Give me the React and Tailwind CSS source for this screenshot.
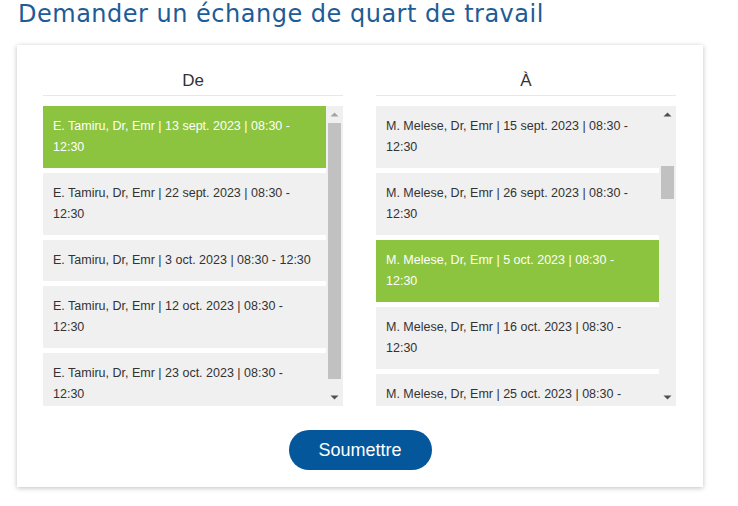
import React from "react";

const left = [
  { t: "E. Tamiru, Dr, Emr | 13 sept. 2023 | 08:30 - 12:30", sel: true },
  { t: "E. Tamiru, Dr, Emr | 22 sept. 2023 | 08:30 - 12:30" },
  { t: "E. Tamiru, Dr, Emr | 3 oct. 2023 | 08:30 - 12:30" },
  { t: "E. Tamiru, Dr, Emr | 12 oct. 2023 | 08:30 - 12:30" },
  { t: "E. Tamiru, Dr, Emr | 23 oct. 2023 | 08:30 - 12:30" },
];
const right = [
  { t: "M. Melese, Dr, Emr | 15 sept. 2023 | 08:30 - 12:30" },
  { t: "M. Melese, Dr, Emr | 26 sept. 2023 | 08:30 - 12:30" },
  { t: "M. Melese, Dr, Emr | 5 oct. 2023 | 08:30 - 12:30", sel: true },
  { t: "M. Melese, Dr, Emr | 16 oct. 2023 | 08:30 - 12:30" },
  { t: "M. Melese, Dr, Emr | 25 oct. 2023 | 08:30 - 12:30" },
];

function Up({ color }) {
  return (
    <svg width="9" height="5" viewBox="0 0 9 5" className="block">
      <path d="M0.5 4.5 L4.5 0.5 L8.5 4.5 Z" fill={color} />
    </svg>
  );
}
function Down({ color }) {
  return (
    <svg width="9" height="5" viewBox="0 0 9 5" className="block">
      <path d="M0.5 0.5 L4.5 4.5 L8.5 0.5 Z" fill={color} />
    </svg>
  );
}

function List({ items, thumbTop, thumbH, upColor }) {
  return (
    <div className="flex h-[300px] mt-[10px]">
      <div className="w-[283px] overflow-hidden flex flex-col gap-[5px]">
        {items.map((it, i) => (
          <div
            key={i}
            className={
              "shrink-0 pl-[10px] pr-[12px] py-[10px] text-[12.5px] leading-[21px] " +
              (it.sel ? "bg-[#8cc43f] text-white" : "bg-[#f0f0f0] text-[#333333]")
            }
          >
            {it.t}
          </div>
        ))}
      </div>
      <div className="w-[17px] bg-[#f0f0f0] flex flex-col items-center">
        <div className="h-[17px] flex items-center justify-center">
          <Up color={upColor} />
        </div>
        <div className="flex-1 w-full">
          <div
            className="mx-[2px] bg-[#c1c1c1]"
            style={{ marginTop: thumbTop, height: thumbH }}
          />
        </div>
        <div className="h-[17px] flex items-center justify-center">
          <Down color="#505050" />
        </div>
      </div>
    </div>
  );
}

export default function App() {
  return (
    <div
      className="w-[738px] h-[506px] bg-white overflow-hidden"
      style={{ fontFamily: '"Liberation Sans", Arial, sans-serif' }}
    >
      <h1
        className="pl-[18px] text-[24px] leading-[28px] text-[#1d5c96] tracking-[0.5px]"
        style={{ fontFamily: '"DejaVu Sans", sans-serif', fontWeight: 400 }}
      >
        Demander un échange de quart de travail
      </h1>
      <div className="ml-[17px] mt-[17px] w-[686px] h-[442px] bg-white shadow-[0_1px_5px_rgba(0,0,0,0.25)] px-[26px] pt-[25px]">
        <div className="flex gap-[33px]">
          <div className="w-[300px]">
            <div className="text-center text-[17px] leading-[22px] text-[#333333] pb-[3px] border-b border-[#e8e8e8]">
              De
            </div>
            <List items={left} thumbTop={0} thumbH={256} upColor="#a3a3a3" />
          </div>
          <div className="w-[300px]">
            <div className="text-center text-[17px] leading-[22px] text-[#333333] pb-[3px] border-b border-[#e8e8e8]">
              À
            </div>
            <List items={right} thumbTop={43} thumbH={33} upColor="#505050" />
          </div>
        </div>
        <div className="flex justify-center mt-[24px]">
          <button className="w-[143px] h-[40px] rounded-full bg-[#04579b] text-white text-[18px]">
            Soumettre
          </button>
        </div>
      </div>
    </div>
  );
}
